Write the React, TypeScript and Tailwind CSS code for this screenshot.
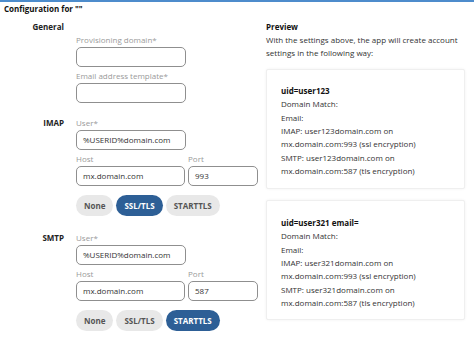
import React from "react";

const font = { fontFamily: '"Open Sans", "Noto Sans", sans-serif' };

function Label({ children }: { children: React.ReactNode }) {
  return <div className="h-[13px] leading-[13px] text-[#9a9a9a]">{children}</div>;
}

function Input({ value = "", className = "" }: { value?: string; className?: string }) {
  return (
    <div
      className={`mt-[1px] h-[20px] rounded-[5px] border border-[#8f8f8f] bg-white pl-[6px] leading-[18px] text-[#333] ${className}`}
    >
      {value}
    </div>
  );
}

function Pills({ active }: { active: number }) {
  const items = ["None", "SSL/TLS", "STARTTLS"];
  return (
    <div className="mt-[9px] flex gap-[3px]">
      {items.map((t, i) => (
        <div
          key={t}
          className={`h-[21px] rounded-full px-[8px] font-bold leading-[21px] ${
            i === active ? "bg-[#2d5f96] text-white" : "bg-[#e8e8e8] text-[#555]"
          }`}
        >
          {t}
        </div>
      ))}
    </div>
  );
}

function Server({ name, port, active, mt }: { name: string; port: string; active: number; mt: string }) {
  return (
    <div className={`flex ${mt}`}>
      <div className="w-[64px] h-[13px] leading-[13px] text-right font-bold text-[#222]">{name}</div>
      <div className="ml-[12px] flex flex-col">
        <Label>User*</Label>
        <Input value="%USERID%domain.com" className="w-[110px]" />
        <div className="mt-[2px] flex gap-[3px]">
          <div className="flex flex-col">
            <Label>Host</Label>
            <Input value="mx.domain.com" className="w-[109px]" />
          </div>
          <div className="flex flex-col">
            <Label>Port</Label>
            <Input value={port} className="w-[70px]" />
          </div>
        </div>
        <Pills active={active} />
      </div>
    </div>
  );
}

function PreviewBox({ lines, mt, pt }: { lines: string[]; mt: string; pt: string }) {
  return (
    <div
      className={`${mt} ${pt} h-[120px] w-[199px] rounded-[2px] border border-[#efefef] bg-white px-[14px] leading-[13.33px] text-[#333] shadow-[0_0_3px_rgba(0,0,0,0.06)]`}
    >
      {lines.map((l, i) => (
        <div key={i} className={i === 0 ? "font-bold text-[#111]" : ""}>
          {l}
        </div>
      ))}
    </div>
  );
}

export default function App() {
  return (
    <div className="relative h-[337px] w-[474px] overflow-hidden bg-white text-[8px]" style={font}>
      <div className="h-[2px] w-full bg-[#4d8ccc]" />
      <div className="h-[13px] pl-[4px] font-bold leading-[13px] text-[#111]">Configuration for ""</div>
      <div className="flex">
        <div className="w-[266px] shrink-0">
          <div className="mt-[5px] flex">
            <div className="w-[64px] h-[13px] leading-[13px] text-right font-bold text-[#222]">General</div>
          </div>
          <div className="ml-[76px] flex flex-col">
            <Label>Provisioning domain*</Label>
            <Input className="w-[110px]" />
            <div className="mt-[2px]">
              <Label>Email address template*</Label>
            </div>
            <Input className="w-[110px]" />
          </div>
          <Server name="IMAP" port="993" active={1} mt="mt-[13px]" />
          <Server name="SMTP" port="587" active={2} mt="mt-[15px]" />
        </div>
        <div className="flex flex-col">
          <div className="mt-[5px] h-[13px] font-bold leading-[13px] text-[#111]">Preview</div>
          <div className="w-[205px] leading-[13px] text-[#333]">
            With the settings above, the app will create account settings in the following way:
          </div>
          <PreviewBox
            mt="mt-[10px]"
            pt="pt-[14px]"
            lines={[
              "uid=user123",
              "Domain Match:",
              "Email:",
              "IMAP: user123domain.com on",
              "mx.domain.com:993 (ssl encryption)",
              "SMTP: user123domain.com on",
              "mx.domain.com:587 (tls encryption)",
            ]}
          />
          <PreviewBox
            mt="mt-[11px]"
            pt="pt-[15px]"
            lines={[
              "uid=user321 email=",
              "Domain Match:",
              "Email:",
              "IMAP: user321domain.com on",
              "mx.domain.com:993 (ssl encryption)",
              "SMTP: user321domain.com on",
              "mx.domain.com:587 (tls encryption)",
            ]}
          />
        </div>
      </div>
    </div>
  );
}
